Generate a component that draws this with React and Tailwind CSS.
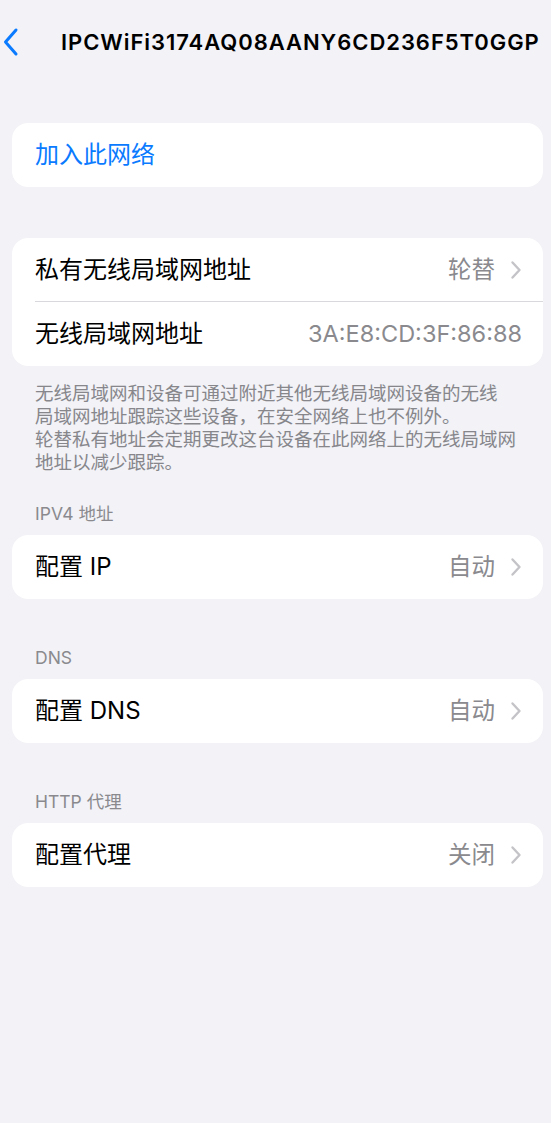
import React from 'react';

const font = { fontFamily: 'Inter, "Noto Sans CJK SC", sans-serif' };

function Chevron() {
  return (
    <svg width="12" height="20" viewBox="0 0 12 20" className="ml-[15px]">
      <path d="M2.5 2.5 L9.5 10 L2.5 17.5" fill="none" stroke="#c4c4c8" strokeWidth="2.4" strokeLinecap="round" strokeLinejoin="round" />
    </svg>
  );
}

function Row({ label, value, chevron, divider }) {
  return (
    <div className="relative h-[64px] flex items-center pl-[23px] pr-[21px]">
      <span className="text-[24px] text-black flex-1">{label}</span>
      {value && <span className="text-[23.5px] text-[#8a8a8e]">{value}</span>}
      {chevron && <Chevron />}
      {divider && <div className="absolute bottom-0 left-[23px] right-0 h-px bg-[#d9d9dd]" />}
    </div>
  );
}

function Section({ title, children }) {
  return (
    <div className="mt-[49px]">
      <div className="px-[23px] h-[20px] text-[17.5px] leading-[20px] text-[#8a8a8e]">{title}</div>
      <div className="mt-[11px] bg-white rounded-[16px] overflow-hidden">{children}</div>
    </div>
  );
}

export default function App() {
  return (
    <div className="min-h-[1123px] bg-[#f2f2f7] pl-[12px] pr-[8px]" style={font}>
      <div className="h-[84px] flex items-center -ml-[12px]">
        <svg width="24" height="30" viewBox="0 0 24 30" className="ml-[1px]">
          <path d="M15 3 L4.5 15 L15 27" fill="none" stroke="#0a7aff" strokeWidth="3" strokeLinecap="round" strokeLinejoin="round" />
        </svg>
        <h1 className="ml-[36px] text-[22px] tracking-[0.95px] font-semibold text-black whitespace-nowrap">IPCWiFi3174AQ08AANY6CD236F5T0GGP</h1>
      </div>

      <div className="mt-[39px] bg-white rounded-[16px] h-[64px] flex items-center pl-[23px]">
        <span className="text-[24px] text-[#0a7aff]">加入此网络</span>
      </div>

      <div className="mt-[51px] bg-white rounded-[16px] overflow-hidden">
        <Row label="私有无线局域网地址" value="轮替" chevron divider />
        <Row label="无线局域网地址" value="3A:E8:CD:3F:86:88" />
      </div>
      <div className="pt-[16px] px-[23px] text-[18.5px] leading-[23px] text-[#86868b] whitespace-nowrap">
        <p>无线局域网和设备可通过附近其他无线局域网设备的无线</p>
        <p>局域网地址跟踪这些设备，在安全网络上也不例外。</p>
        <p>轮替私有地址会定期更改这台设备在此网络上的无线局域网</p>
        <p>地址以减少跟踪。</p>
      </div>

      <div className="-mt-[19px]">
        <Section title="IPV4 地址">
          <Row label="配置 IP" value="自动" chevron />
        </Section>
      </div>
      <Section title="DNS">
        <Row label="配置 DNS" value="自动" chevron />
      </Section>
      <Section title="HTTP 代理">
        <Row label="配置代理" value="关闭" chevron />
      </Section>
    </div>
  );
}
